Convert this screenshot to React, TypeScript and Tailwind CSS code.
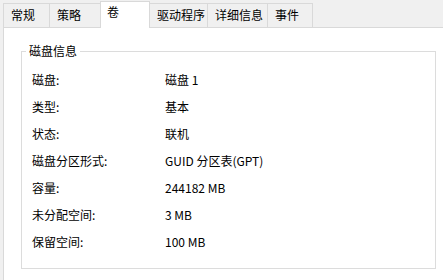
const tabs = ['常规', '策略', '卷', '驱动程序', '详细信息', '事件'];
const tabWidths = ['w-[47px]', 'w-[50px]', 'w-[50px]', 'w-[58px]', 'w-[60px]', 'w-[45px]'];

const rows: [string, string][] = [
  ['磁盘:', '磁盘 1'],
  ['类型:', '基本'],
  ['状态:', '联机'],
  ['磁盘分区形式:', 'GUID 分区表(GPT)'],
  ['容量:', '244182 MB'],
  ['未分配空间:', '3 MB'],
  ['保留空间:', '100 MB'],
];

export default function App() {
  const active = 2;

  return (
    <div
      className="w-[443px] h-[280px] bg-[#f0f0f0] flex flex-col overflow-hidden text-[12px] text-black"
      style={{ fontFamily: '"Noto Sans CJK SC", "Noto Sans", sans-serif' }}
    >
      {/* Tabs */}
      <div className="flex items-end h-[27px] pl-[3px]">
        {tabs.map((t, i) =>
          i === active ? (
            <div
              key={t}
              className={`${tabWidths[i]} h-[27px] -mb-px relative z-10 bg-white border border-b-0 border-[#d9d9d9] pl-[6px] pt-[2px] leading-[16px]`}
            >
              {t}
            </div>
          ) : (
            <div
              key={t}
              className={`${tabWidths[i]} h-[24px] border border-[#d9d9d9] border-b-0 ${
                i === active + 1 || i === 0 ? '' : 'border-l-0'
              } ${i === active - 1 ? 'border-r-0' : ''} ${i === active + 1 ? 'border-l-0' : ''} pl-[7px] pt-[3px] leading-[16px] bg-[#f0f0f0]`}
            >
              {t}
            </div>
          )
        )}
      </div>

      {/* Panel */}
      <div className="flex-1 ml-[3px] bg-white border-l border-t border-[#d9d9d9] pl-[17px] pt-[23px]">
        <div className="relative w-[415px] h-[218px] border border-[#dcdcdc] pl-[10px] pt-[14px]">
          <span className="absolute left-[4px] top-[-9px] bg-white px-[3px] leading-[16px]">磁盘信息</span>
          {rows.map(([k, v]) => (
            <div key={k} className="flex h-[27px] items-center">
              <div className="w-[133px]">{k}</div>
              <div>{v}</div>
            </div>
          ))}
        </div>
      </div>
    </div>
  );
}
